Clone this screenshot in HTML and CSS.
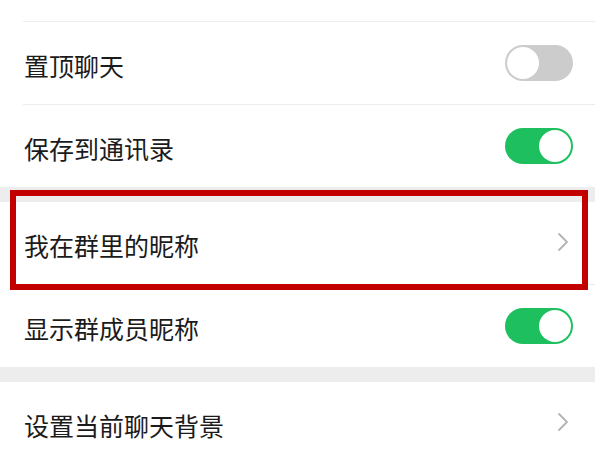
FILE: index.html
```html
<!DOCTYPE html>
<html lang="zh-CN">
<head>
<meta charset="utf-8">
<title>聊天信息</title>
<link rel="stylesheet" href="styles.css">
</head>
<body>
<div class="page">
  <div class="group">
    <div class="row row-tail"></div>
    <div class="row">
      <span class="label">置顶聊天</span>
      <span class="switch"><span class="knob"></span></span>
    </div>
    <div class="row last">
      <span class="label">保存到通讯录</span>
      <span class="switch on"><span class="knob"></span></span>
    </div>
  </div>
  <div class="gap"></div>
  <div class="group">
    <div class="row highlighted">
      <span class="label">我在群里的昵称</span>
      <svg class="chev" width="12" height="20" viewBox="0 0 12 20"><path d="M2 2 L10 10 L2 18" fill="none" stroke="#b3b3b3" stroke-width="1.8" stroke-linecap="round" stroke-linejoin="round"/></svg>
      <div class="mark"></div>
    </div>
    <div class="row last">
      <span class="label">显示群成员昵称</span>
      <span class="switch on"><span class="knob"></span></span>
    </div>
  </div>
  <div class="gap"></div>
  <div class="group">
    <div class="row last">
      <span class="label">设置当前聊天背景</span>
      <svg class="chev" width="12" height="20" viewBox="0 0 12 20"><path d="M2 2 L10 10 L2 18" fill="none" stroke="#b3b3b3" stroke-width="1.8" stroke-linecap="round" stroke-linejoin="round"/></svg>
    </div>
  </div>
</div>
</body>
</html>
```
FILE: styles.css
```css
html, body {
  margin: 0;
  padding: 0;
  background: #ffffff;
  overflow: hidden;
}
body {
  width: 600px;
  height: 450px;
  font-family: "Noto Sans CJK SC", "Noto Sans", sans-serif;
}
.page {
  width: 595px;
}
.group {
  background: #ffffff;
  padding-left: 23px;
}
.row {
  position: relative;
  height: 82px;
  display: flex;
  align-items: center;
  justify-content: space-between;
  padding-right: 22px;
  border-bottom: 1px solid #ececec;
}
.row.last {
  border-bottom: none;
}
.row-tail {
  height: 21px;
}
.label {
  font-size: 25px;
  color: #1b1b1b;
  padding-top: 4px;
  padding-left: 1px;
  line-height: 30px;
}
.gap {
  height: 15px;
  background: #ededed;
}
.switch {
  width: 68px;
  height: 36px;
  border-radius: 18px;
  background: #cccccc;
  box-sizing: border-box;
  padding: 2px;
  display: flex;
  justify-content: flex-start;
}
.switch.on {
  background: #1dbf5e;
  justify-content: flex-end;
}
.knob {
  width: 32px;
  height: 32px;
  border-radius: 50%;
  background: #ffffff;
}
.chev {
  margin-right: 4px;
  margin-top: -2px;
}
.mark {
  position: absolute;
  left: -13px;
  top: -12px;
  width: 578px;
  height: 100px;
  box-sizing: border-box;
  border: 6px solid #c20000;
}
```
